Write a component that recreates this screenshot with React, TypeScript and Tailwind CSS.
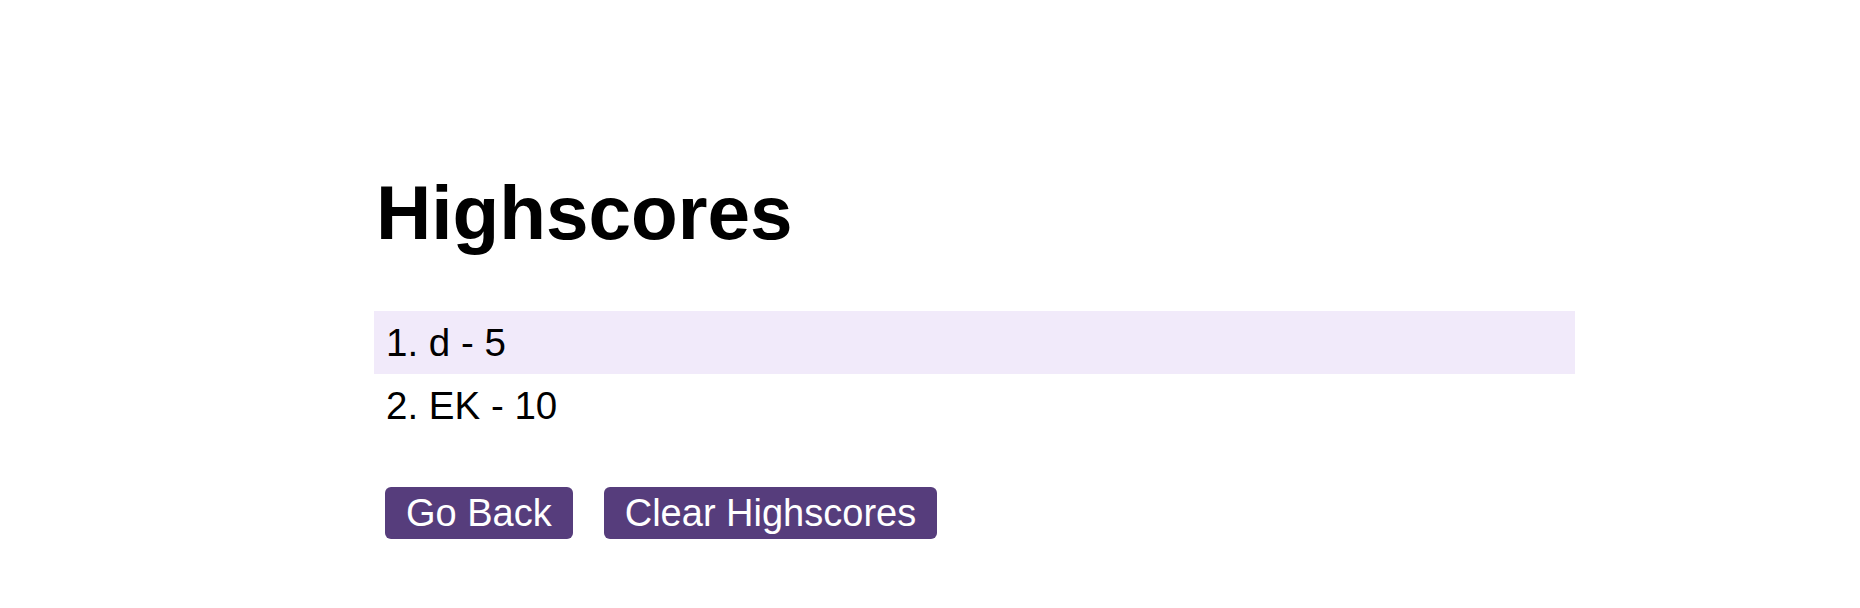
import React from "react";

export default function App() {
  const scores = [
    { name: "d", score: 5 },
    { name: "EK", score: 10 },
  ];
  return (
    <div
      className="min-h-[608px] w-full bg-white text-black"
      style={{ fontFamily: '"Liberation Sans", Arial, sans-serif' }}
    >
      <div className="pl-[374px] pt-[170px]">
        <div className="w-[1201px]">
          <h1 className="m-0 pl-[2px] text-[76.5px] font-bold leading-[86px]">Highscores</h1>
          <ol className="mt-[55px] list-none p-0">
            {scores.map((s, i) => (
              <li
                key={i}
                className={
                  "h-[63px] pl-[12px] pr-[10px] py-[10px] text-[38.5px] leading-[43px] " +
                  (i === 0 ? "bg-[#f1eafa]" : "bg-white")
                }
              >
                {i + 1}. {s.name} - {s.score}
              </li>
            ))}
          </ol>
          <div className="mt-[50px] flex gap-[31px] pl-[11px]">
            <button className="h-[52px] rounded-[6px] bg-[#563d7c] px-[21px] text-[38px] leading-[44px] text-white">
              Go Back
            </button>
            <button className="h-[52px] rounded-[6px] bg-[#563d7c] px-[21px] text-[38px] leading-[44px] text-white">
              Clear Highscores
            </button>
          </div>
        </div>
      </div>
    </div>
  );
}
